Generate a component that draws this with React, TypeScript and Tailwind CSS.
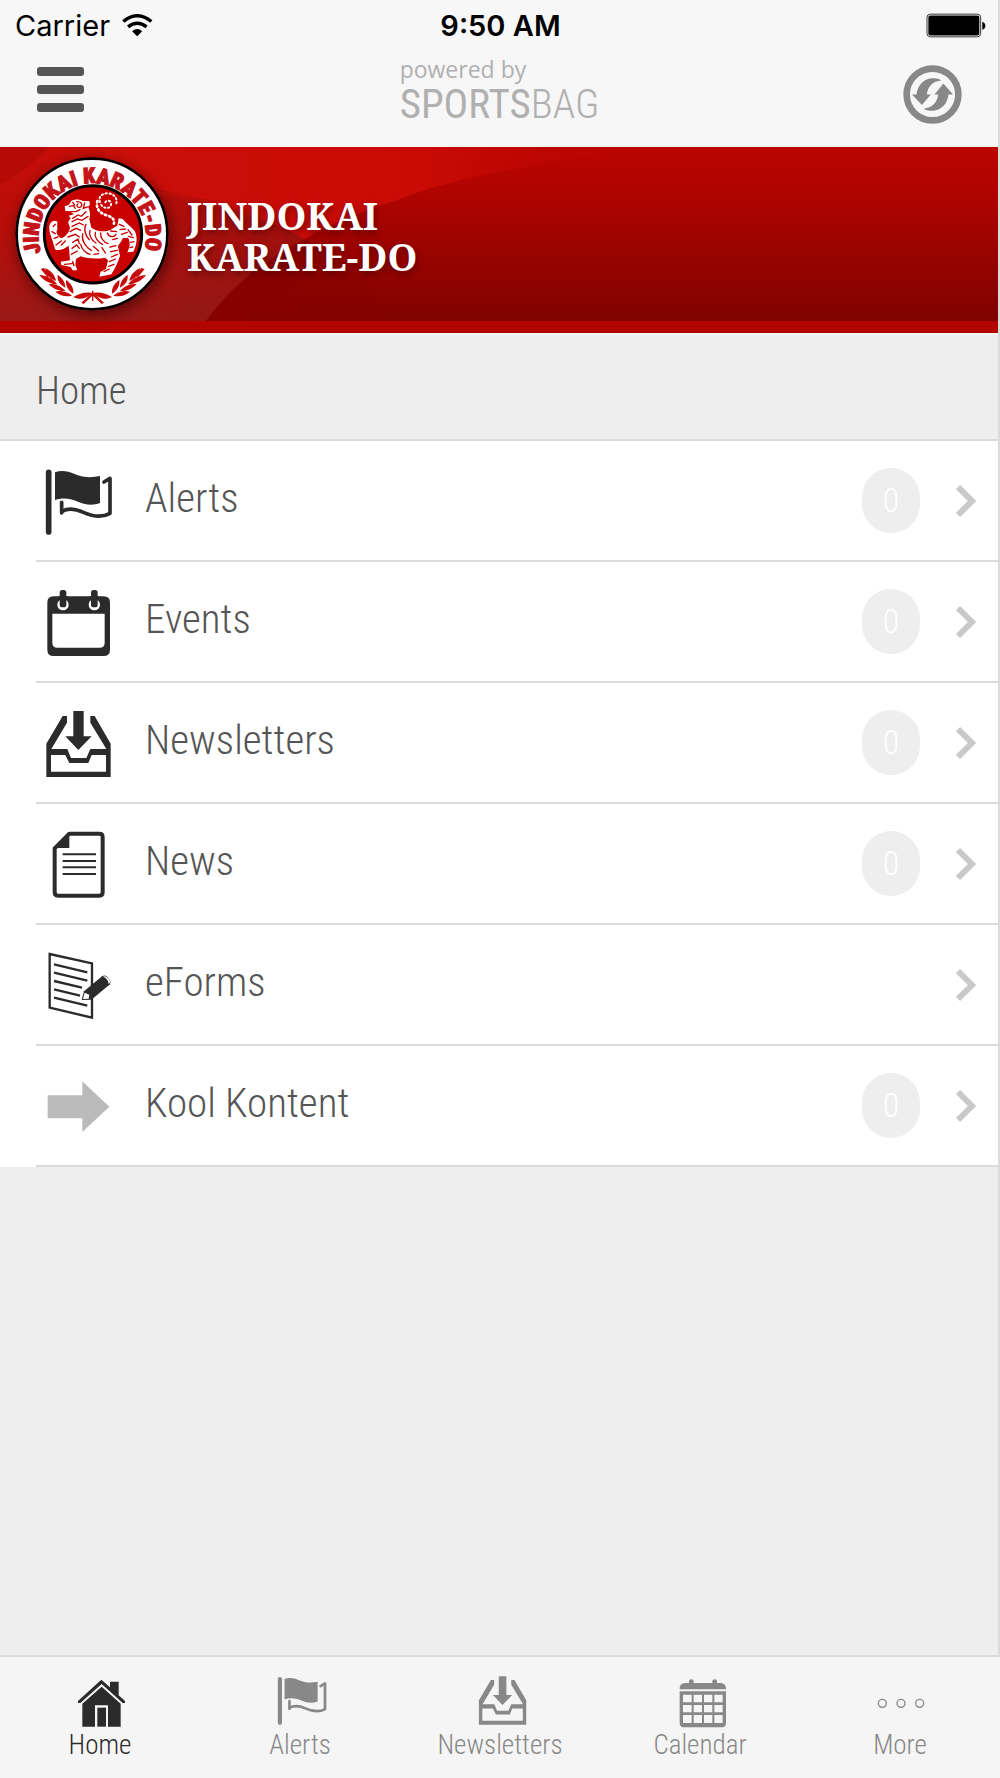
import type { ReactNode } from 'react';

const condensed = "font-['Roboto_Condensed',Roboto,sans-serif]";

type IconProps = { viewBox: string; className: string };

function FlagIcon({ viewBox, className }: IconProps) {
  return (
    <svg viewBox={viewBox} className={className} fill="none" stroke="currentColor" aria-hidden="true">
      <path d="M146 428V607" strokeWidth="17" strokeLinecap="round" />
      <path
        d="M165 428C183 421 202 423 224 433C252 445 276 444 300 439V520C278 528 258 526 234 516C207 505 188 504 165 511Z"
        fill="currentColor"
        stroke="none"
      />
      <path d="M312 457L330 446V551C304 566 279 561 250 548C224 536 206 534 186 545" strokeWidth="11" strokeLinecap="round" strokeLinejoin="round" />
      <path d="M185 518V550" strokeWidth="11" strokeLinecap="round" />
    </svg>
  );
}

function EventsIcon({ viewBox, className }: IconProps) {
  return (
    <svg viewBox={viewBox} className={className} fill="currentColor" aria-hidden="true">
      <path
        fillRule="evenodd"
        d="M161 79H311Q330 79 330 98V239Q330 258 311 258H161Q142 258 142 239V98Q142 79 161 79ZM157 131V218Q157 233 172 233H299Q314 233 314 218V131Z"
      />
      <circle cx="189" cy="104" r="17" className="fill-white" />
      <circle cx="283" cy="104" r="17" className="fill-white" />
      <path d="M175 79H203V90H175ZM269 79H297V90H269Z" />
      <rect x="179" y="60" width="20" height="52" rx="8" />
      <rect x="273" y="60" width="20" height="52" rx="8" />
    </svg>
  );
}

function InboxIcon({ viewBox, className }: IconProps) {
  return (
    <svg viewBox={viewBox} className={className} fill="currentColor" aria-hidden="true">
      <path d="M220 423H251V499H275L235 540L196 499H220Z" />
      <path
        fillRule="evenodd"
        d="M188 438H201V458L154 537H202L213 564H259L271 537H319L271 458V438H284L332 521V621H139V521ZM153 555V605H318V555H275L265 579H208L196 555Z"
      />
    </svg>
  );
}

function NewsIcon({ viewBox, className }: IconProps) {
  return (
    <svg viewBox={viewBox} className={className} fill="none" stroke="currentColor" aria-hidden="true">
      <path d="M208 791H298Q308 791 308 801V967Q308 977 298 977H174Q164 977 164 967V835Z" strokeWidth="12" strokeLinejoin="round" />
      <path d="M208 786V834H160Z" fill="currentColor" stroke="none" />
      <path d="M188 853H288M188 873H288M188 892H288M188 912H288" strokeWidth="6" />
    </svg>
  );
}

function FormIcon({ viewBox, className }: IconProps) {
  return (
    <svg viewBox={viewBox} className={className} fill="none" stroke="currentColor" aria-hidden="true">
      <path d="M149 71L276 99V262L149 232Z" strokeWidth="7" />
      <path d="M162 102L262 126M162 127L262 151M162 152L246 172M162 177L240 196M162 202L262 226" strokeWidth="7" />
      <path d="M252 183L307 137Q316 132 325 142Q334 153 330 162L274 208L245 209Z" fill="currentColor" stroke="none" />
      <path d="M254 187L268 193L266 205L249 206ZM309 139Q324 143 326 162Q335 155 325 144Q317 135 309 139Z" className="fill-white" stroke="none" />
    </svg>
  );
}

function ArrowIcon({ viewBox, className }: IconProps) {
  return (
    <svg viewBox={viewBox} className={className} aria-hidden="true">
      <path d="M143 495H247V453L328 529L247 605V564H143Z" fill="#bababa" />
    </svg>
  );
}

function HouseIcon({ viewBox, className }: IconProps) {
  return (
    <svg viewBox={viewBox} className={className} fill="currentColor" aria-hidden="true">
      <path d="M304 118L330 141V124H356V165L375 182V188H368L305 131L241 188H234V182Z" />
      <path d="M305 139L362 190V259H324V195H285V259H247V190Z" />
      <rect x="292" y="202" width="26" height="57" />
    </svg>
  );
}

function CalendarIcon({ viewBox, className }: IconProps) {
  return (
    <svg viewBox={viewBox} className={className} fill="currentColor" aria-hidden="true">
      <path d="M539 147V142Q541 129 555 128H567V121Q574 113 581 121V128H637V121Q644 113 651 121V128H663Q676 129 678 142V147Z" />
      <path
        fillRule="evenodd"
        d="M539 153H678V247Q678 261 664 261H553Q539 261 539 247ZM549 163V186H575V163ZM581 163V186H606V163ZM612 163V186H637V163ZM643 163V186H668V163ZM549 194V216H575V194ZM581 194V216H606V194ZM612 194V216H637V194ZM643 194V216H668V194ZM549 224V248H575V224ZM581 224V248H606V224ZM612 224V248H637V224ZM643 224V248H668V224Z"
      />
    </svg>
  );
}

function DotsIcon({ viewBox, className }: IconProps) {
  return (
    <svg viewBox={viewBox} className={className} fill="none" stroke="currentColor" strokeWidth="4" aria-hidden="true">
      <circle cx="1147" cy="189" r="12" />
      <circle cx="1203" cy="189" r="12" />
      <circle cx="1259" cy="189" r="12" />
    </svg>
  );
}

function WifiIcon() {
  return (
    <svg viewBox="362 38 92 68" className="h-[23px] w-[31px]" fill="none" stroke="#000" aria-hidden="true">
      <path d="M366 60Q407 26 449 60" strokeWidth="10" />
      <path d="M380 76Q407 54 435 76" strokeWidth="10" />
      <path d="M392 89Q407 76 422 89L407 104Z" fill="#000" stroke="none" />
    </svg>
  );
}

function BatteryIcon() {
  return (
    <svg viewBox="1280 37 180 74" className="h-[25px] w-[60px]" aria-hidden="true">
      <rect x="1283" y="40" width="161" height="68" rx="10" fill="#fff" stroke="#333" strokeWidth="3" />
      <rect x="1287" y="44" width="153" height="60" rx="6" />
      <path d="M1449 63Q1458 66 1458 75Q1458 84 1449 87Z" />
    </svg>
  );
}

function RefreshIcon() {
  return (
    <svg viewBox="39 30 178 178" className="size-[59px]" aria-hidden="true">
      <circle cx="128" cy="119" r="78" fill="none" stroke="#888" strokeWidth="20" />
      <path d="M66 119H80C82 88 108 64 141 71C147 72 151 74 154 77C130 78 113 96 111 119H123L96 151Z" fill="#888" />
      <path d="M190 119H176C174 150 148 174 115 167C109 166 105 164 102 161C126 160 143 142 145 119H134L161 86Z" fill="#888" />
    </svg>
  );
}

function Laurel() {
  return (
    <g fill="#c80a0a">
      <path d="M243 427C226 424 205 430 190 440C208 450 228 445 245 430Z" />
      <path d="M186 436C176 426 152 418 136 424C150 436 168 441 186 436Z" />
      <path d="M190 430C192 414 183 398 168 389C166 406 174 421 190 430Z" />
      <path d="M166 422C154 408 134 398 116 402C130 416 148 424 166 422Z" />
      <path d="M166 412C166 396 156 382 143 374C141 391 150 404 166 412Z" />
      <path d="M142 402C130 386 108 374 88 374C100 391 122 402 142 402Z" />
      <path d="M138 392C136 376 124 362 106 353C106 367 116 380 124 385Z" />
      <path d="M92 356L102 353L120 378L112 380Z" />
      <path d="M250 424L214 457L221 461L252 432Z" />
    </g>
  );
}

function Emblem() {
  return (
    <svg viewBox="15 20 462 462" className="size-[154px] shrink-0 rounded-full shadow-[2px_4px_14px_rgba(60,0,0,0.7)]" role="img" aria-label="Jindokai Karate-Do emblem">
      <circle cx="246" cy="251" r="226" fill="#fff" stroke="#000" strokeWidth="8" />
      <circle cx="249" cy="252" r="146" fill="#c80000" stroke="#000" strokeWidth="9" />
      <defs>
        <path id="ring" d="M97 318A161 161 0 1 1 400 310" />
      </defs>
      <text
        className="font-['Roboto_Condensed',sans-serif] text-[65px] font-black"
        fill="#c4141a"
        stroke="#c4141a"
        strokeWidth="3"
        textAnchor="middle"
      >
        <textPath href="#ring" startOffset="50%">
          JINDOKAI KARATE-DO
        </textPath>
      </text>
      <g fill="none" stroke="#fff" strokeLinecap="round" strokeLinejoin="round">
        <path d="M286 156C291 147 306 151 303 164C299 178 276 175 271 158C262 140 277 128 294 129C314 131 324 147 318 162" strokeWidth="6" strokeDasharray="4 8" />
        <path d="M262 152C256 178 272 190 294 196C312 203 317 213 308 228" strokeWidth="8" strokeDasharray="4 9" />
      </g>
      <path
        d="M184 152C192 146 210 146 218 152L238 152L240 162L234 170C240 180 242 196 238 206L244 232C262 244 284 246 302 238L322 226L326 204L338 206C350 220 362 228 374 242C384 262 380 284 370 304L352 306C360 290 362 276 354 262L338 264C334 276 324 284 324 290L330 316C324 336 316 352 304 372L268 379L272 364L288 356L294 330L286 322C266 326 232 326 212 318L198 326L196 344L202 360L188 360L182 350L154 344L152 334L180 330L178 306L176 286C162 296 148 302 136 298L130 280C126 262 116 248 118 226C122 212 134 208 142 214L142 238C136 246 142 256 154 264C168 258 176 248 180 232L174 216L182 204L176 196L192 192L178 182L166 182L164 168L176 164Z"
        fill="#fff"
      />
      <g fill="none" stroke="#c80000" strokeWidth="4" strokeLinecap="round">
        <path d="M178 168L190 166L196 174M188 156L194 164M200 154C212 152 220 162 212 170C204 174 196 166 204 160M224 158L220 174L232 170M182 184L198 184L210 178M188 204L204 194L214 198L228 184" />
        <path d="M186 214L202 206L216 210L234 198" />
        <path d="M186 228L208 218L220 224M180 244L198 234L212 240M174 260L196 252L208 260M188 276L204 266L208 280M186 294L200 284L208 294M184 312L202 302" />
        <path d="M228 222C220 236 226 256 238 268M240 240C236 254 244 270 258 278M256 246C252 260 264 276 278 282M272 248C270 262 282 276 294 280M218 250C214 270 226 290 244 300M212 282C216 296 226 308 240 312M250 288L266 302M252 312L266 310M276 292L286 308" />
        <path d="M292 248C298 262 312 262 318 252M302 242L320 244M308 268L322 264M328 222L342 228M330 238L346 236M334 252L352 246M354 238L366 254M356 258L370 262M362 276L372 274M360 292L368 290" />
        <path d="M300 290L318 286M302 304L322 300M304 320L322 312M298 334L316 326M296 348L312 342M282 364L298 356M130 228L136 222M126 244L136 250M132 264L144 260M138 284L154 272M154 284L166 272M164 342L186 340M188 334L192 346" />
      </g>
      <Laurel />
      <g transform="translate(496 0) scale(-1 1)">
        <Laurel />
      </g>
      <path d="M248 421V452" stroke="#c80a0a" strokeWidth="4" />
    </svg>
  );
}

function BannerBackdrop() {
  return (
    <svg viewBox="0 0 998 174" preserveAspectRatio="none" className="absolute inset-0 size-full" aria-hidden="true">
      <defs>
        <linearGradient id="base" x1="0" y1="0" x2="0" y2="1">
          <stop offset="0" stopColor="#bb0500" />
          <stop offset="0.25" stopColor="#b00400" />
          <stop offset="1" stopColor="#800300" />
        </linearGradient>
        <linearGradient id="left" x1="0" y1="0" x2="0.15" y2="1">
          <stop offset="0" stopColor="#c80d08" />
          <stop offset="0.45" stopColor="#b80e0a" />
          <stop offset="1" stopColor="#981a18" />
        </linearGradient>
        <linearGradient id="fade" x1="0" y1="0" x2="1" y2="0">
          <stop offset="0" stopColor="#cc0f0a" />
          <stop offset="0.6" stopColor="#c90a05" />
          <stop offset="1" stopColor="#bb0500" stopOpacity="0" />
        </linearGradient>
        <linearGradient id="wedge" x1="0" y1="0" x2="1" y2="0">
          <stop offset="0" stopColor="#8f0d0b" stopOpacity="0" />
          <stop offset="1" stopColor="#8f0d0b" stopOpacity="0.45" />
        </linearGradient>
        <linearGradient id="dark" x1="0" y1="0" x2="1" y2="0">
          <stop offset="0" stopColor="#850100" stopOpacity="0.9" />
          <stop offset="1" stopColor="#850100" stopOpacity="0.3" />
        </linearGradient>
      </defs>
      <rect width="998" height="174" fill="url(#base)" />
      <path d="M0 0H330L305 92C260 115 230 145 206 174H0Z" fill="url(#left)" />
      <path d="M100 0H640C540 18 460 28 400 52C350 68 325 80 305 92C260 68 210 50 160 43C130 35 110 20 100 0Z" fill="url(#fade)" />
      <path d="M60 40C170 42 240 60 305 92C260 116 232 142 206 174H60Z" fill="url(#wedge)" />
      <path d="M305 92C350 112 375 140 390 174H206C230 140 265 112 305 92Z" fill="url(#dark)" />
      <path d="M0 0H50C25 25 10 32 0 38Z" fill="#b50a06" />
    </svg>
  );
}

type Row = { label: string; count?: number; icon: ReactNode };

const rowIcon = 'size-[68px] shrink-0 text-[#2b2b2b]';

const rows: Row[] = [
  { label: 'Alerts', count: 0, icon: <FlagIcon viewBox="132 412 204 204" className={rowIcon} /> },
  { label: 'Events', count: 0, icon: <EventsIcon viewBox="132 54 204 204" className={rowIcon} /> },
  { label: 'Newsletters', count: 0, icon: <InboxIcon viewBox="132 417 204 204" className={rowIcon} /> },
  { label: 'News', count: 0, icon: <NewsIcon viewBox="132 780 204 204" className={rowIcon} /> },
  { label: 'eForms', icon: <FormIcon viewBox="132 62 204 204" className={rowIcon} /> },
  { label: 'Kool Kontent', count: 0, icon: <ArrowIcon viewBox="132 425 204 204" className={rowIcon} /> },
];

const tabIcon = 'h-[52px] w-[50px] overflow-visible';

const tabs: { label: string; active?: boolean; icon: ReactNode }[] = [
  { label: 'Home', active: true, icon: <HouseIcon viewBox="225 107 150 156" className={tabIcon} /> },
  { label: 'Alerts', icon: <FlagIcon viewBox="126 416 204 212" className={tabIcon} /> },
  { label: 'Newsletters', icon: <InboxIcon viewBox="123 422 204 212" className={tabIcon} /> },
  { label: 'Calendar', icon: <CalendarIcon viewBox="525 107 150 156" className={tabIcon} /> },
  { label: 'More', icon: <DotsIcon viewBox="1125 107 150 156" className={tabIcon} /> },
];

export default function App() {
  return (
    <div className={`flex min-h-screen flex-col bg-[#eeeeee] ${condensed}`}>
      <div className="flex flex-1 flex-col border-r-2 border-[#dbdbdb]">
        <header className="bg-[#f7f7f7]">
          <div className="grid h-[50px] grid-cols-3 items-center pt-px pr-3 pl-[15px] font-['Inter',sans-serif] text-[29px] text-black">
            <span className="flex items-center gap-3">
              Carrier
              <WifiIcon />
            </span>
            <span className="text-center font-semibold whitespace-nowrap">9:50 AM</span>
            <span className="flex justify-end">
              <BatteryIcon />
            </span>
          </div>
          <div className="grid h-[97px] grid-cols-3 items-start pr-9 pl-[37px]">
            <button type="button" aria-label="Menu" className="flex w-[47px] flex-col gap-[9px] pt-[17px]">
              <span className="h-[9px] w-full rounded-[3px] bg-[#555]" />
              <span className="h-[9px] w-full rounded-[3px] bg-[#555]" />
              <span className="h-[9px] w-full rounded-[3px] bg-[#555]" />
            </button>
            <div className="justify-self-center pt-1 text-[#b0b0b0]">
              <p className="font-['Open_Sans',sans-serif] text-[23px] leading-[30px]">powered by</p>
              <p className="text-[41px] leading-[40px]">
                SPORTS<span className="font-light">BAG</span>
              </p>
            </div>
            <button type="button" aria-label="Refresh" className="justify-self-end pt-[15px]">
              <RefreshIcon />
            </button>
          </div>
        </header>

        <section className="relative flex h-[186px] items-start border-b-[12px] border-[#b30500] pt-[10px] pl-[15px]">
          <BannerBackdrop />
          <div className="relative flex items-center gap-[18px]">
            <Emblem />
            <h1 className="pt-1 font-['Noto_Serif',serif] text-[38px] leading-[41px] font-bold text-white [text-shadow:1px_3px_6px_rgba(60,0,0,0.6)]">
              JINDOKAI
              <br />
              KARATE-DO
            </h1>
          </div>
        </section>

        <main className="flex-1">
          <h2 className="flex h-[108px] items-center border-t-2 border-b-2 border-t-[#f5f5f5] border-b-[#dbdbdb] pt-2 pl-9 text-[39px] font-light text-[#555]">
            Home
          </h2>
          <ul className="bg-white pl-9">
            {rows.map((row) => (
              <li key={row.label}>
                <a href="#" className="flex h-[121px] items-center border-b-2 border-[#dbdbdb] pr-[22px] pl-2">
                  {row.icon}
                  <span className="flex-1 pb-1 pl-[33px] text-[41px] font-light text-[#555]">{row.label}</span>
                  {row.count !== undefined && (
                    <span className="mr-9 flex h-[65px] w-[58px] items-center justify-center rounded-full bg-[#eeeeee] text-[34px] font-light text-white">
                      {row.count}
                    </span>
                  )}
                  <svg viewBox="0 0 20 34" className="h-[34px] w-5" fill="none" stroke="#c9c9c9" strokeWidth="6" aria-hidden="true">
                    <path d="M2 3L16 17L2 31" />
                  </svg>
                </a>
              </li>
            ))}
          </ul>
        </main>
      </div>

      <nav className="grid h-[123px] grid-cols-5 border-t-2 border-[#dbdbdb] bg-[#f5f5f5] pt-[19px]">
        {tabs.map((tab) => (
          <a
            key={tab.label}
            href="#"
            aria-current={tab.active ? 'page' : undefined}
            className={`flex flex-col items-center text-[27px] leading-[34px] font-light ${tab.active ? 'text-[#2b2b2b]' : 'text-[#888]'}`}
          >
            {tab.icon}
            {tab.label}
          </a>
        ))}
      </nav>
    </div>
  );
}
